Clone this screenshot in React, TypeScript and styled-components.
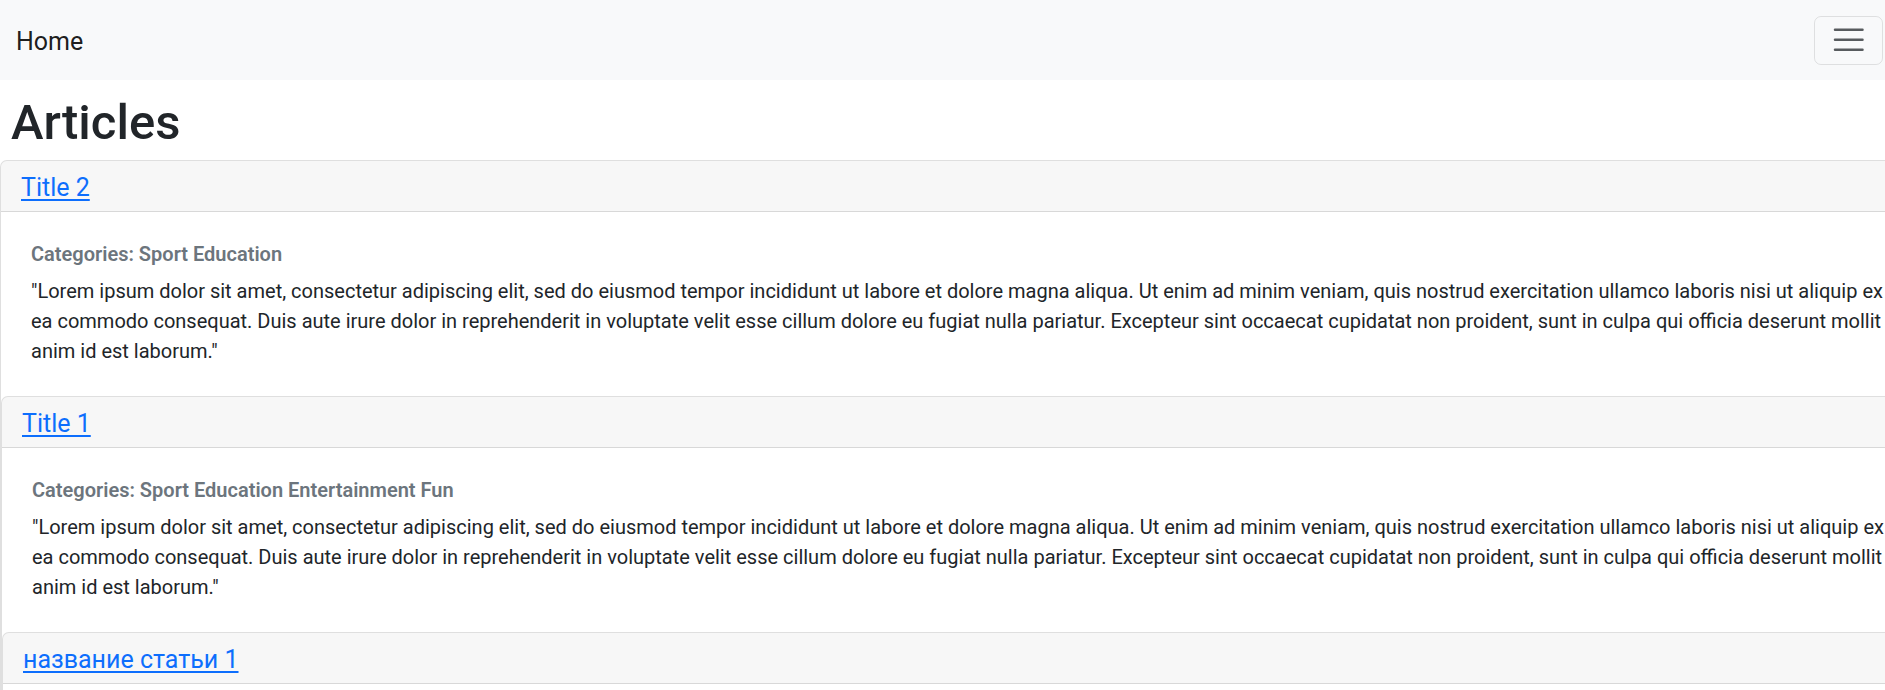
import React from "react";
import styled, { createGlobalStyle } from "styled-components";

const GlobalStyle = createGlobalStyle`
  html, body {
    margin: 0;
    padding: 0;
    overflow: hidden;
    background: #ffffff;
  }
  body {
    font-family: Roboto, "Noto Sans", "Liberation Sans", sans-serif;
    font-size: 20px;
    line-height: 1.5;
    color: #212529;
  }
  * { box-sizing: border-box; }
`;

const Navbar = styled.nav`
  height: 80px;
  background: #f8f9fa;
  display: flex;
  align-items: center;
  justify-content: space-between;
  padding: 0 2px 0 16px;
`;

const Brand = styled.a`
  font-size: 25px;
  line-height: 1.5;
  color: rgba(0, 0, 0, 0.9);
  text-decoration: none;
  padding-top: 4px;
`;

const Toggler = styled.button`
  width: 69px;
  height: 49px;
  display: flex;
  align-items: center;
  justify-content: center;
  padding: 0;
  background: transparent;
  border: 1px solid rgba(0, 0, 0, 0.1);
  border-radius: 7px;
  color: rgba(33, 37, 41, 0.75);
`;

const Main = styled.main`
  width: 1930px;
`;

const Heading = styled.h1`
  margin: 13px 0 7px;
  padding: 0 11px;
  font-size: 49px;
  font-weight: 500;
  line-height: 60px;
  color: #212529;
`;

const Card = styled.div`
  border: 1px solid rgba(0, 0, 0, 0.125);
  border-radius: 7px;
  background: #ffffff;
  display: flex;
  flex-direction: column;
`;

const CardHeader = styled.div`
  height: 51px;
  padding: 12px 20px 8px;
  background: rgba(0, 0, 0, 0.03);
  border-bottom: 1px solid rgba(0, 0, 0, 0.125);
  border-radius: 6px 6px 0 0;
  display: flex;
  align-items: center;
`;

const TitleLink = styled.a`
  font-size: 25px;
  line-height: 30px;
  color: #0d6efd;
  text-decoration: underline;
  text-underline-offset: 3px;
`;

const CardBody = styled.div`
  padding: 30px;
`;

const Categories = styled.h6`
  margin: 0 0 10px;
  font-size: 20px;
  font-weight: 600;
  line-height: 1.2;
  color: #6c757d;
`;

const CardText = styled.p`
  margin: 0;
  font-size: 20px;
  line-height: 30px;
`;

const LOREM =
  '"Lorem ipsum dolor sit amet, consectetur adipiscing elit, sed do eiusmod tempor incididunt ut labore et dolore magna aliqua. Ut enim ad minim veniam, quis nostrud exercitation ullamco laboris nisi ut aliquip ex ea commodo consequat. Duis aute irure dolor in reprehenderit in voluptate velit esse cillum dolore eu fugiat nulla pariatur. Excepteur sint occaecat cupidatat non proident, sunt in culpa qui officia deserunt mollit anim id est laborum."';

type Article = { title: string; categories: string[]; text: string };

const articles: Article[] = [
  { title: "Title 2", categories: ["Sport", "Education"], text: LOREM },
  { title: "Title 1", categories: ["Sport", "Education", "Entertainment", "Fun"], text: LOREM },
  { title: "название статьи 1", categories: ["Sport"], text: LOREM },
];

function HamburgerIcon() {
  return (
    <svg width="37.5" height="37.5" viewBox="0 0 30 30" aria-hidden="true">
      <path
        d="M4 7h22M4 15h22M4 23h22"
        stroke="currentColor"
        strokeWidth="2"
        strokeLinecap="round"
        fill="none"
      />
    </svg>
  );
}

function ArticleCard({ items }: { items: Article[] }) {
  if (items.length === 0) return null;
  const [a, ...rest] = items;
  return (
    <Card>
      <CardHeader>
        <TitleLink href="#">{a.title}</TitleLink>
      </CardHeader>
      <CardBody>
        <Categories>Categories: {a.categories.join(" ")}</Categories>
        <CardText>{a.text}</CardText>
      </CardBody>
      <ArticleCard items={rest} />
    </Card>
  );
}

export default function App() {
  return (
    <>
      <GlobalStyle />
      <Navbar>
        <Brand href="#">Home</Brand>
        <Toggler type="button" aria-label="Toggle navigation">
          <HamburgerIcon />
        </Toggler>
      </Navbar>
      <Main>
        <Heading>Articles</Heading>
        <ArticleCard items={articles} />
      </Main>
    </>
  );
}
